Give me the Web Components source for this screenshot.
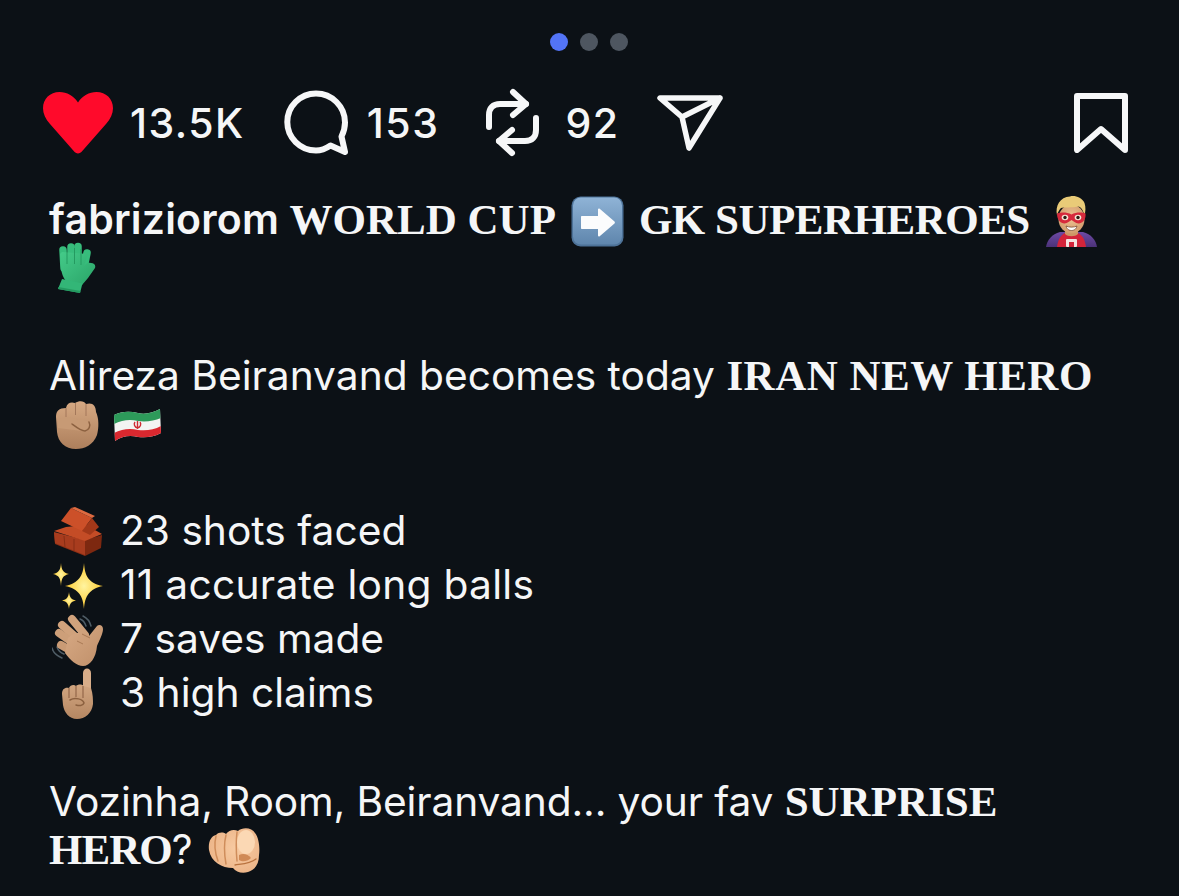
<!DOCTYPE html>
<html lang="en">
<head>
<meta charset="utf-8">
<title>Post</title>
<style>
  html, body { margin: 0; background: #0c1116; }
</style>
</head>
<body>
<post-view>
  <page-dots></page-dots>
  <action-bar>
    <action-item icon="heart" count="13.5K" style="--mr:39px;--gap:17px"></action-item>
    <action-item icon="bubble" count="153" style="--mr:46px;--gap:18px"></action-item>
    <action-item icon="repost" count="92" style="--mr:38px;--gap:25px"></action-item>
    <action-item icon="send"></action-item>
    <action-item icon="bookmark" slot="end"></action-item>
  </action-bar>
  <post-caption>
    <caption-para>
      <caption-line><strong>fabriziorom</strong> <b style="margin-left:-1px">WORLD CUP</b><emoji-icon name="arrow" w="53" h="51" raise="12.5" ml="15" mr="15"></emoji-icon><b style="letter-spacing:-.5px">GK SUPERHEROES</b><emoji-icon name="hero" w="51" h="52" raise="13" ml="16"></emoji-icon></caption-line>
      <caption-line><emoji-icon name="glove" w="38" h="51" raise="19.5" ml="9"></emoji-icon></caption-line>
    </caption-para>
    <caption-para style="margin-top:49px">
      <caption-line>Alireza Beiranvand becomes today <b style="letter-spacing:.5px">IRAN NEW HERO</b></caption-line>
      <caption-line><emoji-icon name="fist" w="44" h="49" raise="19.5" ml="6"></emoji-icon><emoji-icon name="flag" w="47" h="33" raise="19.5" ml="15"></emoji-icon></caption-line>
    </caption-para>
    <caption-para style="margin-top:47px">
      <caption-line><emoji-icon name="bricks" w="50" h="50" raise="14" ml="3" mr="18"></emoji-icon>23 shots faced</caption-line>
      <caption-line style="letter-spacing:.27px"><emoji-icon name="sparkles" w="50" h="46" raise="13" ml="4" mr="17"></emoji-icon>11 accurate long balls</caption-line>
      <caption-line><emoji-icon name="wave" w="51" h="52" raise="13" ml="3" mr="17"></emoji-icon>7 saves made</caption-line>
      <caption-line><emoji-icon name="point" w="32" h="51" raise="13.5" ml="12" mr="27"></emoji-icon>3 high claims</caption-line>
    </caption-para>
    <caption-para style="margin-top:58px;--lh:48px">
      <caption-line style="letter-spacing:-.13px">Vozinha, Room, Beiranvand... your fav <b>SURPRISE</b></caption-line>
      <caption-line><b style="letter-spacing:-1px">HERO</b>? <emoji-icon name="punch" w="52" h="45" raise="13.5" ml="4"></emoji-icon></caption-line>
    </caption-para>
  </post-caption>
</post-view>

<script>
// Trazos de los iconos de la barra de acciones (coordenadas = px de pantalla)
const ACTION_ICONS = {
  heart: { w: 70, h: 62, svg: `<path fill="#ff0a2b" d="M35 61.5C33.5 61.5 32 60.5 30.5 58.8L7 32C2.5 26.8 0 21.5 0 16.2 0 6.8 7 0 16.5 0 24 0 30.5 3.8 35 10.5 39.5 3.8 46 0 53.500 0 63 0 70 6.8 70 16.200 70 21.500 67.500 26.800 63 32L39.500 58.800C38 60.500 36.500 61.500 35 61.500Z"/>` },
  bubble: { w: 65, h: 65, svg: `<path fill="none" stroke="#f6f7f8" stroke-width="6" stroke-linejoin="round" stroke-linecap="round" d="M32 3.500C48 3.500 61 16.500 61 32.500 61 37.500 60 41.500 57.500 46.500L61 62 46.500 55.500C42 58.500 37.500 60.500 32 60.500 16 60.500 3.300 47.500 3.300 32 3.300 16.500 16 3.500 32 3.500Z"/>` },
  repost: { w: 55, h: 69, svg: `<g fill="none" stroke="#f6f7f8" stroke-width="6" stroke-linecap="round" stroke-linejoin="round"><path d="M28 4 41 16 28 27"/><path d="M41 16H15C8 16 4 20 4 27V39"/><path d="M27 42 14 53 27 65"/><path d="M14 53H40C47 53 51 49 51 42V30"/></g>` },
  send: { w: 66, h: 57, svg: `<path fill="none" stroke="#f6f7f8" stroke-width="5.500" stroke-linejoin="round" stroke-linecap="round" d="M3 4H63L32 54 25 23ZM25 23 63 4"/>` },
  bookmark: { w: 54, h: 60, svg: `<path fill="none" stroke="#f6f7f8" stroke-width="6" stroke-linejoin="round" d="M3 3H51V57L27 36 3 57Z"/>` }
};

// Los emojis no existen como fuente aquí: se dibujan a mano, cada uno a su tamaño en px
const EMOJIS = {
  arrow: `<defs><linearGradient id="a" x1="0" y1="0" x2="0" y2="1"><stop offset="0" stop-color="#8fb3d6"/><stop offset="1" stop-color="#5f86ad"/></linearGradient></defs>
    <rect x=".5" y=".5" width="52" height="50" rx="9" fill="#4d7298"/><rect x="2" y="1.500" width="49" height="47" rx="8" fill="url(#a)"/>
    <path fill="#fbfcfd" d="M11 20H27V13.500C27 12.500 28 12.200 28.700 12.800L43.500 25.500C44 26 44 27 43.500 27.500L28.700 40.200C28 40.800 27 40.500 27 39.500V33H11C10.400 33 10 32.600 10 32V21C10 20.400 10.400 20 11 20Z"/>`,
  hero: `<defs><linearGradient id="c" x1="0" y1="0" x2="0" y2="1"><stop offset="0" stop-color="#6d4aa5"/><stop offset="1" stop-color="#4b3278"/></linearGradient><radialGradient id="f" cx=".5" cy=".45" r=".6"><stop offset="0" stop-color="#efc393"/><stop offset="1" stop-color="#cf9a6b"/></radialGradient></defs>
    <path fill="url(#c)" d="M0 52C1 45 6 39 14 37H37C45 39 50 45 51 52Z"/>
    <path fill="#d3243a" d="M11 52C12 44 15 40 19 38H32C36 40 39 44 40 52Z"/>
    <path fill="#cd9766" d="M19 33H32V39C29 42 22 42 19 39Z"/>
    <rect x="20" y="44" width="11" height="8" rx="1" fill="#f4e3e0"/><rect x="23" y="47" width="5" height="5" fill="#d3243a"/>
    <ellipse cx="25.500" cy="24" rx="13" ry="14.500" fill="url(#f)"/>
    <path fill="#e9cb78" d="M11 20C9 11 14 2 24 1.500 28 0 36 2 38.500 8 40 12 39.500 17 38.500 20 37 15 35 12 32 11.500 26 13 18 12 15 13 13 15 12 17 11 20Z"/>
    <path fill="#d62a3c" d="M11 18.500C15 17 21 17 25.500 19.500 30 17 36 17 39.500 18.500 40 23 38 28 33 28.500 29.500 28.800 27.500 26 25.500 25 23.500 26 21.500 28.800 18 28.500 13 28 11 23 11 18.500Z"/>
    <ellipse cx="19" cy="22.500" rx="3.300" ry="2.700" fill="#f6e6d6"/><ellipse cx="32" cy="22.500" rx="3.300" ry="2.700" fill="#f6e6d6"/><circle cx="19" cy="22.500" r="1.700" fill="#2a1c14"/><circle cx="32" cy="22.500" r="1.700" fill="#2a1c14"/>
    <path fill="#fdfdfb" stroke="#6b3b22" stroke-width=".7" d="M20 31C23 32.500 28 32.500 31 31 30 35 27 35.500 25.500 35.500 24 35.500 21 35 20 31Z"/>`,
  glove: `<defs><linearGradient id="g" x1="0" y1="0" x2="1" y2="1"><stop offset="0" stop-color="#44cb89"/><stop offset="1" stop-color="#2aa468"/></linearGradient></defs>
    <g stroke-linecap="round" stroke="#37bd7c" stroke-width="7.500"><path d="M6 26 5 8"/><path d="M13 24 13 5"/><path d="M20 24 20 4.500"/><path d="M26 26 29 11"/></g>
    <path fill="url(#g)" d="M2 12C3 22 2 32 8 39L24 43 30 36 37 26C38 23 36 21 33 21 29 20 28 22 26 24L30 12 4 10Z"/>
    <path stroke="#249a60" stroke-width="1" fill="none" d="M9 8V22M16.500 6V22M23 7V23"/>
    <path fill="#33b677" d="M4 37 24.500 41.500 22 51 0 47Z"/><path fill="#249a60" d="M0 47 22 51 22.500 49 .4 45Z"/>`,
  fist: `<defs><linearGradient id="s" x1="0" y1="0" x2="0" y2="1"><stop offset="0" stop-color="#d6a983"/><stop offset="1" stop-color="#ad7f5c"/></linearGradient></defs>
    <path fill="url(#s)" d="M1 17C1 11 4 8 11 8 12 3 16 1.500 20 3 24 .5 29 .5 31 4 37 2 41 5 41 12 44 18 44 28 42 35 38 45 30 49 21 49 10 49 3 42 2 32Z"/>
    <g fill="none" stroke="#a3775a" stroke-width="1"><path d="M11 8V17"/><path d="M20.500 3V15"/><path d="M31 4V16"/></g>
    <path fill="#c79a75" d="M3 20C9 16 18 17 22 20 30 19 35 21 35 26 35 30 31 32 27 31 20 30 10 29 3 28Z"/>
    <path fill="none" stroke="#8c6140" stroke-width="1.500" stroke-linecap="round" d="M17 24C21 27 26 31 30 31 34 30 36 26 34 22"/>`,
  flag: `<defs><clipPath id="w"><path d="M0 7C8 3 16 3 24 5 32 7 40 4 46 1L47 25C40 29 32 30 24 29 16 27 8 28 1 33Z"/></clipPath></defs>
    <g clip-path="url(#w)"><rect width="47" height="33" fill="#f3f4f3"/>
    <path fill="#2d9a5a" d="M0 0H47V10C40 13 32 14 24 13 16 11 8 12 0 16Z"/>
    <path fill="#d9282f" d="M0 25C8 21 16 20 24 22 32 23 40 22 47 18V33H0Z"/></g>
    <path fill="none" stroke="#cf2a32" stroke-width="1.400" d="M23.500 13V21M21 14C19.500 16 20.500 19.500 23.500 20 26.500 19.500 27.500 16 26 14"/>`,
  bricks: `<path fill="#8c2f14" d="M2 27 33 36 33 50 3 38Z"/><path fill="#a83c1e" d="M2 26 33 34 33 49 3 37Z"/><path fill="#7d2810" d="M33 34 50 29 49 42 33 50Z"/>
    <path fill="#c44c26" d="M2 25 14 21 34 19 50 28 33 35Z"/>
    <path fill="#cc5029" d="M9 15 19 2 40 12 30 25Z"/><path fill="#a23819" d="M30 25 40 12 47 21 38 29Z"/><path fill="#de6a40" d="M19 2 23 1 43 10 40 12Z"/>
    <path stroke="#7d2a12" stroke-width=".8" fill="none" d="M12 30 13 41M22 33 22 45"/>`,
  sparkles: `<defs><radialGradient id="y"><stop offset="0" stop-color="#fff4a0"/><stop offset="1" stop-color="#fdc92c"/></radialGradient></defs>
    <g fill="url(#y)"><path d="M31 0C32 13 35 20 50 23 36 26 32 33 31 46 30 33 26 26 12 23 26 20 30 13 31 0Z"/>
    <path d="M8 0C8.500 7 10 9.500 16 11 10 12.500 8.500 15 8 23 7.500 15 6 12.500 0 11 6 9.500 7.500 7 8 0Z"/>
    <path d="M16 29C16.500 34 18 36.500 23 37.500 18 38.500 16.500 41 16 46 15.500 41 14 38.500 9 37.500 14 36.500 15.500 34 16 29Z"/></g>`,
  wave: `<defs><linearGradient id="h" x1="0" y1="0" x2="1" y2="1"><stop offset="0" stop-color="#d8aa85"/><stop offset="1" stop-color="#bf8f69"/></linearGradient></defs>
    <g fill="none" stroke="#4f5d66" stroke-width="1.500" stroke-linecap="round"><path d="M31 2C35 4 38 8 39 12"/><path d="M28 5C31 6 33 9 34 12"/><path d="M0 34C1 38 5 42 10 44"/><path d="M5 33C6 36 9 39 12 40"/></g>
    <g stroke-width="8" stroke-linecap="round"><path stroke="#d0a27c" d="M20 5 33 21"/><path stroke="#d0a27c" d="M10 11 27 26"/><path stroke="#cd9f79" d="M7 19 24 31"/><path stroke="#ca9b75" d="M9 31 23 39"/></g>
    <path fill="url(#h)" d="M16 24C22 18 32 16 37 22L45 12C47 10 51 11 51 15 51 20 47 27 45 32 44 44 38 52 31 52 25 52 18 46 13 39Z"/>
    <path fill="none" stroke="#a97a55" stroke-width="1" d="M30 20 38 24M25 27 31 30"/>`,
  point: `<defs><linearGradient id="p" x1="0" y1="0" x2="0" y2="1"><stop offset="0" stop-color="#d2a681"/><stop offset="1" stop-color="#b58762"/></linearGradient></defs>
    <path fill="#d8ad89" d="M22 20V5C22 2 24 .5 26 .5 28 .5 30 2 30 5V24Z"/>
    <path fill="url(#p)" d="M1 26C1 21 4 19 8 20 9 17 13 16 15 18 17 16 21 16 23 18L30 20C32 26 32 32 32 36 31 45 24 51 16 51 8 51 3 44 2 37Z"/>
    <path fill="none" stroke="#94684a" stroke-width="1.200" d="M8 20V30M15 18V29M22 18V30"/>
    <path fill="none" stroke="#8c6140" stroke-width="1.500" stroke-linecap="round" d="M9 32C14 29 22 31 23 35 22 38 18 38 15 37"/>`,
  punch: `<defs><radialGradient id="k" cx=".55" cy=".45" r=".7"><stop offset="0" stop-color="#f8cba2"/><stop offset="1" stop-color="#eab184"/></radialGradient></defs>
    <path fill="url(#k)" d="M1 22C0 14 3 8 8 7 11 4 15 4 18 6 21 2 26 1 30 3 34 -1 44 -1 47 5 51 10 52 20 51 27 51 36 47 42 40 44 34 46 28 44 25 40 14 40 3 34 1 22Z"/>
    <g fill="none" stroke="#cf8d5b" stroke-width="1.500" stroke-linecap="round"><path d="M8 8C6 16 7 25 10 33"/><path d="M18 7C16 15 16 25 18 36"/><path d="M29 4C28 12 28 22 29 33"/></g>
    <ellipse cx="38" cy="14" rx="9" ry="12" fill="#fbd8b4"/>
    <path fill="#d08a56" d="M31 27C35 25 40 26 43 30 39 34 34 34 31 32Z"/>
    <path fill="none" stroke="#b9733f" stroke-width="1.300" stroke-linecap="round" d="M27 37C33 36 42 36 48 31"/>`
};

// Contenedor general de la publicación
class PostView extends HTMLElement {
  constructor() {
    super();
    this.attachShadow({ mode: "open" });
    this.shadowRoot.innerHTML = `
      <style>
        :host { display: flex; flex-direction: column; width: 1179px; height: 896px; overflow: hidden;
                background: #0c1116; color: #f5f6f7; font-family: Inter, "Liberation Sans", sans-serif; }
      </style>
      <slot></slot>`;
  }
}

// Puntos del carrusel
class PageDots extends HTMLElement {
  constructor() {
    super();
    this.attachShadow({ mode: "open" });
    this.shadowRoot.innerHTML = `
      <style>
        :host { display: flex; justify-content: center; gap: 12px; padding: 33px 2px 0 0; }
        i { width: 18px; height: 18px; border-radius: 50%; background: #4e5660; }
        i:first-of-type { background: #5374f6; }
      </style>
      <i></i><i></i><i></i>`;
  }
}

// Barra con me gusta, comentarios, reposts, enviar y guardar
class ActionBar extends HTMLElement {
  constructor() {
    super();
    this.attachShadow({ mode: "open" });
    this.shadowRoot.innerHTML = `
      <style>
        :host { display: flex; align-items: center; justify-content: space-between; height: 69px;
                margin-top: 37px; padding: 0 51px 0 43px; }
        div { display: flex; align-items: center; }
      </style>
      <div><slot></slot></div>
      <slot name="end"></slot>`;
  }
}

class ActionItem extends HTMLElement {
  constructor() {
    super();
    this.attachShadow({ mode: "open" });
  }

  connectedCallback() {
    const icono = ACTION_ICONS[this.getAttribute("icon")];
    const count = this.getAttribute("count");
    this.shadowRoot.innerHTML = `
      <style>
        :host { display: flex; align-items: center; gap: var(--gap, 17px); margin-right: var(--mr, 0); }
        svg { display: block; }
        span { font-size: 41px; line-height: 48px; font-weight: 500; letter-spacing: 1.5px; }
      </style>
      <svg width="${icono.w}" height="${icono.h}" viewBox="0 0 ${icono.w} ${icono.h}">${icono.svg}</svg>
      ${count ? `<span>${count}</span>` : ""}`;
  }
}

class PostCaption extends HTMLElement {
  constructor() {
    super();
    this.attachShadow({ mode: "open" });
    this.shadowRoot.innerHTML = `
      <style>
        :host { display: block; margin-top: 35px; padding-left: 49px; }
      </style>
      <slot></slot>`;
  }
}

class CaptionPara extends HTMLElement {
  constructor() {
    super();
    this.attachShadow({ mode: "open" });
    this.shadowRoot.innerHTML = `<style>:host { display: block; }</style><slot></slot>`;
  }
}

// Una línea de texto: altura fija, los emojis no la empujan
class CaptionLine extends HTMLElement {
  constructor() {
    super();
    this.attachShadow({ mode: "open" });
    this.shadowRoot.innerHTML = `
      <style>
        :host { display: block; height: var(--lh, 54px); line-height: var(--lh, 54px);
                font-size: 40.7px; white-space: nowrap; }
        ::slotted(strong) { font-size: 41px; font-weight: 600; letter-spacing: .2px; }
        ::slotted(b) { font-family: "Liberation Serif", serif; font-weight: 700; font-size: 43px; letter-spacing: 0; }
      </style>
      <slot></slot>`;
  }
}

// Emoji en línea: caja de alto 0, su centro queda "raise" px sobre la línea base
class EmojiIcon extends HTMLElement {
  constructor() {
    super();
    this.attachShadow({ mode: "open" });
  }

  connectedCallback() {
    const w = this.getAttribute("w");
    const h = this.getAttribute("h");
    const raise = Number(this.getAttribute("raise") || 0);
    const ml = this.getAttribute("ml") || 0;
    const mr = this.getAttribute("mr") || 0;
    this.shadowRoot.innerHTML = `
      <style>
        :host { display: inline-flex; align-items: center; height: 0; line-height: 0;
                vertical-align: ${raise - h / 2}px; margin: 0 ${mr}px 0 ${ml}px; }
        svg { display: block; flex: none; }
      </style>
      <svg width="${w}" height="${h}" viewBox="0 0 ${w} ${h}">${EMOJIS[this.getAttribute("name")]}</svg>`;
  }
}

customElements.define("post-view", PostView);
customElements.define("page-dots", PageDots);
customElements.define("action-bar", ActionBar);
customElements.define("action-item", ActionItem);
customElements.define("post-caption", PostCaption);
customElements.define("caption-para", CaptionPara);
customElements.define("caption-line", CaptionLine);
customElements.define("emoji-icon", EmojiIcon);
</script>
</body>
</html>
